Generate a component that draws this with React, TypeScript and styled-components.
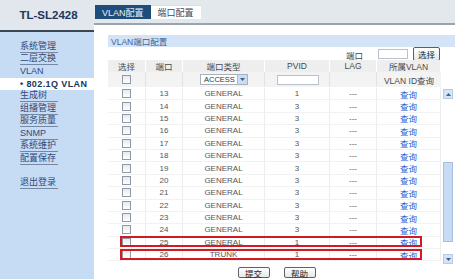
import React from "react";
import styled, { createGlobalStyle } from "styled-components";

const GlobalStyle = createGlobalStyle`
  html, body {
    margin: 0;
    padding: 0;
    background: #ffffff;
  }
  body {
    font-family: "Liberation Sans", "Noto Sans CJK SC", sans-serif;
    font-size: 9px;
    color: #444;
  }
`;

const Page = styled.div`
  display: flex;
  width: 455px;
  height: 279px;
  overflow: hidden;
`;

const Sidebar = styled.div`
  display: flex;
  flex-direction: column;
  width: 94px;
  flex-shrink: 0;
`;

const Brand = styled.div`
  height: 30px;
  background: #e2e7ed;
  border-bottom: 2px solid #3b4653;
  display: flex;
  align-items: center;
  justify-content: center;
  padding-left: 3px;
  font-weight: bold;
  font-size: 11.5px;
  color: #22355a;
`;

const Menu = styled.div`
  flex: 1;
  background: #c6dbf4;
  padding-top: 8px;
  display: flex;
  flex-direction: column;
`;

const MenuItem = styled.div<{ $line?: boolean; $gap?: number }>`
  height: 12.5px;
  margin-top: ${(p) => p.$gap || 0}px;
  padding-left: 20px;
  display: flex;
  align-items: flex-end;
  span {
    display: block;
    width: 38px;
    line-height: 11px;
    font-size: 9px;
    color: #33497a;
    border-bottom: 1px solid ${(p) => (p.$line ? "#7587a3" : "transparent")};
    white-space: nowrap;
  }
`;

const SubItem = styled.div`
  height: 12px;
  background: #ffffff;
  padding-left: 20px;
  display: flex;
  align-items: center;
  font-weight: bold;
  font-size: 9px;
  letter-spacing: 0.4px;
  color: #22355a;
`;

const Main = styled.div`
  flex: 1;
  display: flex;
  flex-direction: column;
`;

const TabBar = styled.div`
  height: 25px;
  box-sizing: border-box;
  background: #e3e8ed;
  border-bottom: 2px solid #9aa4ae;
  display: flex;
  align-items: flex-end;
  padding-left: 1px;
`;

const Tab = styled.div<{ $active?: boolean }>`
  height: 13px;
  margin-bottom: 4px;
  padding: 0 7px;
  display: flex;
  align-items: center;
  font-size: 9px;
  background: ${(p) => (p.$active ? "#ffffff" : "#1f4d7b")};
  color: ${(p) => (p.$active ? "#3a4a60" : "#e8f0f8")};
  border-top: 1px solid ${(p) => (p.$active ? "#d9dfe6" : "#1f4d7b")};
`;

const Panel = styled.div`
  padding: 10px 0 0 14px;
  display: flex;
  flex-direction: column;
`;

const TitleBar = styled.div`
  height: 12px;
  background: #d4e3f6;
  display: flex;
  align-items: center;
  padding-left: 3px;
  font-size: 8.5px;
  color: #40608f;
`;

const Body = styled.div`
  width: 345px;
  display: flex;
  flex-direction: column;
`;

const PortRow = styled.div`
  height: 13px;
  display: flex;
  align-items: center;
  justify-content: flex-end;
  padding-right: 13px;
  gap: 5px;
  font-size: 8.5px;
  color: #444;
  label {
    margin-right: 10px;
    padding-top: 2px;
  }
`;

const TextBox = styled.div<{ $w: number; $ml?: number }>`
  width: ${(p) => p.$w}px;
  height: 10px;
  margin-left: ${(p) => p.$ml || 0}px;
  border: 1px solid #b9c2cc;
  background: #fff;
  box-sizing: border-box;
`;

const SmallButton = styled.div`
  height: 12px;
  padding: 0 4px;
  border: 1px solid #55606c;
  border-radius: 2px;
  background: linear-gradient(#ffffff, #e4e8ec);
  display: flex;
  align-items: center;
  font-size: 8.5px;
  color: #222;
`;

const Grid = styled.div`
  display: grid;
  grid-template-columns: 38px 37px 82px 65px 47px 64px;
  width: 333px;
`;

const HeadCell = styled.div`
  height: 12px;
  background: #eeeeee;
  border-right: 1px solid #ffffff;
  display: flex;
  align-items: center;
  justify-content: center;
  font-size: 8.5px;
  color: #4a4a4a;
  &:last-child {
    border-right: none;
  }
`;

const FilterCell = styled(HeadCell)<{ $start?: boolean }>`
  height: 15px;
  background: #f3f3f3;
  border-right: 1px solid #e2e2e2;
  justify-content: ${(p) => (p.$start ? "flex-start" : "center")};
`;

const Scroller = styled.div`
  display: flex;
  gap: 2px;
  margin-top: 1px;
`;

const Cell = styled.div`
  height: 12.4px;
  box-sizing: border-box;
  border-right: 1px solid #ececec;
  border-bottom: 1px solid #f2f2f2;
  display: flex;
  align-items: center;
  justify-content: center;
  font-size: 8px;
  color: #555;
`;

const Row = styled.div`
  display: contents;
`;

const Marker = styled.div<{ $index: number }>`
  position: absolute;
  left: 12px;
  width: 302px;
  top: ${(p) => p.$index * 12.4 - 0.5}px;
  height: 11px;
  border: 2px solid #d21a22;
  box-sizing: border-box;
  pointer-events: none;
`;

const TableWrap = styled.div`
  position: relative;
`;

const Check = styled.span`
  display: block;
  width: 7px;
  height: 7px;
  border: 1px solid #8e99a5;
  background: linear-gradient(#e6eaee, #ffffff);
`;

const Link = styled.span`
  font-size: 8.5px;
  color: #2a5fcf;
`;

const Select = styled.div`
  width: 48px;
  height: 11px;
  border: 1px solid #a8b2bd;
  background: #fff;
  box-sizing: border-box;
  display: flex;
  align-items: center;
  justify-content: space-between;
  padding-left: 3px;
  font-size: 7.5px;
  color: #333;
  margin-left: 17px;
`;

const Arrow = styled.span`
  width: 9px;
  height: 9px;
  background: #cddcf0;
  border-left: 1px solid #a8b9d0;
  display: flex;
  align-items: center;
  justify-content: center;
`;

const ScrollBar = styled.div`
  width: 9px;
  display: flex;
  flex-direction: column;
`;

const ScrollBtn = styled.div<{ $top?: number }>`
  width: 8px;
  height: 8px;
  margin-top: ${(p) => p.$top || 0}px;
  background: #d6e4f6;
  border: 1px solid #b8cbe4;
  display: flex;
  align-items: center;
  justify-content: center;
`;

const Thumb = styled.div<{ $top: number; $h: number }>`
  width: 8px;
  height: ${(p) => p.$h}px;
  margin-top: ${(p) => p.$top}px;
  background: #c8dbf4;
  border: 1px solid #a7bfe0;
`;

const Footer = styled.div`
  display: flex;
  justify-content: center;
  gap: 14px;
  padding-top: 3px;
  padding-right: 8px;
`;

const Button = styled(SmallButton)`
  height: 11px;
  width: 32px;
  box-sizing: border-box;
  justify-content: center;
  border-color: #59636f;
`;

const Tri = ({ up }: { up?: boolean }) => (
  <svg width="5" height="3" viewBox="0 0 5 3">
    <path d={up ? "M0 3 L2.5 0 L5 3 Z" : "M0 0 L5 0 L2.5 3 Z"} fill="#3c5f94" />
  </svg>
);

type Item = { label: string; line?: boolean; gap?: number };

const menuTop: Item[] = [
  { label: "系统管理", line: true },
  { label: "二层交换", line: true },
  { label: "VLAN" },
];
const menuBottom: Item[] = [
  { label: "生成树", line: true },
  { label: "组播管理", line: true },
  { label: "服务质量", line: true },
  { label: "SNMP", line: true },
  { label: "系统维护", line: true },
  { label: "配置保存", line: true },
  { label: "退出登录", line: true, gap: 12 },
];

const ports = [
  { id: 13, type: "GENERAL", pvid: 1 },
  { id: 14, type: "GENERAL", pvid: 3 },
  { id: 15, type: "GENERAL", pvid: 3 },
  { id: 16, type: "GENERAL", pvid: 3 },
  { id: 17, type: "GENERAL", pvid: 3 },
  { id: 18, type: "GENERAL", pvid: 3 },
  { id: 19, type: "GENERAL", pvid: 3 },
  { id: 20, type: "GENERAL", pvid: 3 },
  { id: 21, type: "GENERAL", pvid: 3 },
  { id: 22, type: "GENERAL", pvid: 3 },
  { id: 23, type: "GENERAL", pvid: 3 },
  { id: 24, type: "GENERAL", pvid: 3 },
  { id: 25, type: "GENERAL", pvid: 1 },
  { id: 26, type: "TRUNK", pvid: 1 },
];

// rows outlined in red (index into ports)
const marked = [12, 13];

export default function App() {
  return (
    <Page>
      <GlobalStyle />
      <Sidebar>
        <Brand>TL-SL2428</Brand>
        <Menu>
          {menuTop.map((m) => (
            <MenuItem key={m.label} $line={m.line} $gap={m.gap}>
              <span>{m.label}</span>
            </MenuItem>
          ))}
          <SubItem>• 802.1Q VLAN</SubItem>
          {menuBottom.map((m) => (
            <MenuItem key={m.label} $line={m.line} $gap={m.gap}>
              <span>{m.label}</span>
            </MenuItem>
          ))}
        </Menu>
      </Sidebar>
      <Main>
        <TabBar>
          <Tab>VLAN配置</Tab>
          <Tab $active>端口配置</Tab>
        </TabBar>
        <Panel>
          <TitleBar>VLAN端口配置</TitleBar>
          <Body>
            <PortRow>
              <label>端口</label>
              <TextBox $w={30} />
              <SmallButton>选择</SmallButton>
            </PortRow>
            <Grid>
              {["选择", "端口", "端口类型", "PVID", "LAG", "所属VLAN"].map((h) => (
                <HeadCell key={h}>{h}</HeadCell>
              ))}
              <FilterCell>
                <Check />
              </FilterCell>
              <FilterCell />
              <FilterCell $start>
                <Select>
                  ACCESS
                  <Arrow>
                    <Tri />
                  </Arrow>
                </Select>
              </FilterCell>
              <FilterCell $start>
                <TextBox $w={42} $ml={12} />
              </FilterCell>
              <FilterCell />
              <FilterCell>VLAN ID查询</FilterCell>
            </Grid>
            <Scroller>
              <TableWrap>
                <Grid>
                  {ports.map((p) => (
                    <Row key={p.id}>
                      <Cell>
                        <Check />
                      </Cell>
                      <Cell>{p.id}</Cell>
                      <Cell>{p.type}</Cell>
                      <Cell>{p.pvid}</Cell>
                      <Cell>---</Cell>
                      <Cell>
                        <Link>查询</Link>
                      </Cell>
                    </Row>
                  ))}
                </Grid>
                {marked.map((i) => (
                  <Marker key={i} $index={i} />
                ))}
              </TableWrap>
              <ScrollBar>
                <ScrollBtn $top={1}>
                  <Tri up />
                </ScrollBtn>
                <Thumb $top={63} $h={78} />
                <ScrollBtn $top={12}>
                  <Tri />
                </ScrollBtn>
              </ScrollBar>
            </Scroller>
            <Footer>
              <Button>提交</Button>
              <Button>帮助</Button>
            </Footer>
          </Body>
        </Panel>
      </Main>
    </Page>
  );
}
